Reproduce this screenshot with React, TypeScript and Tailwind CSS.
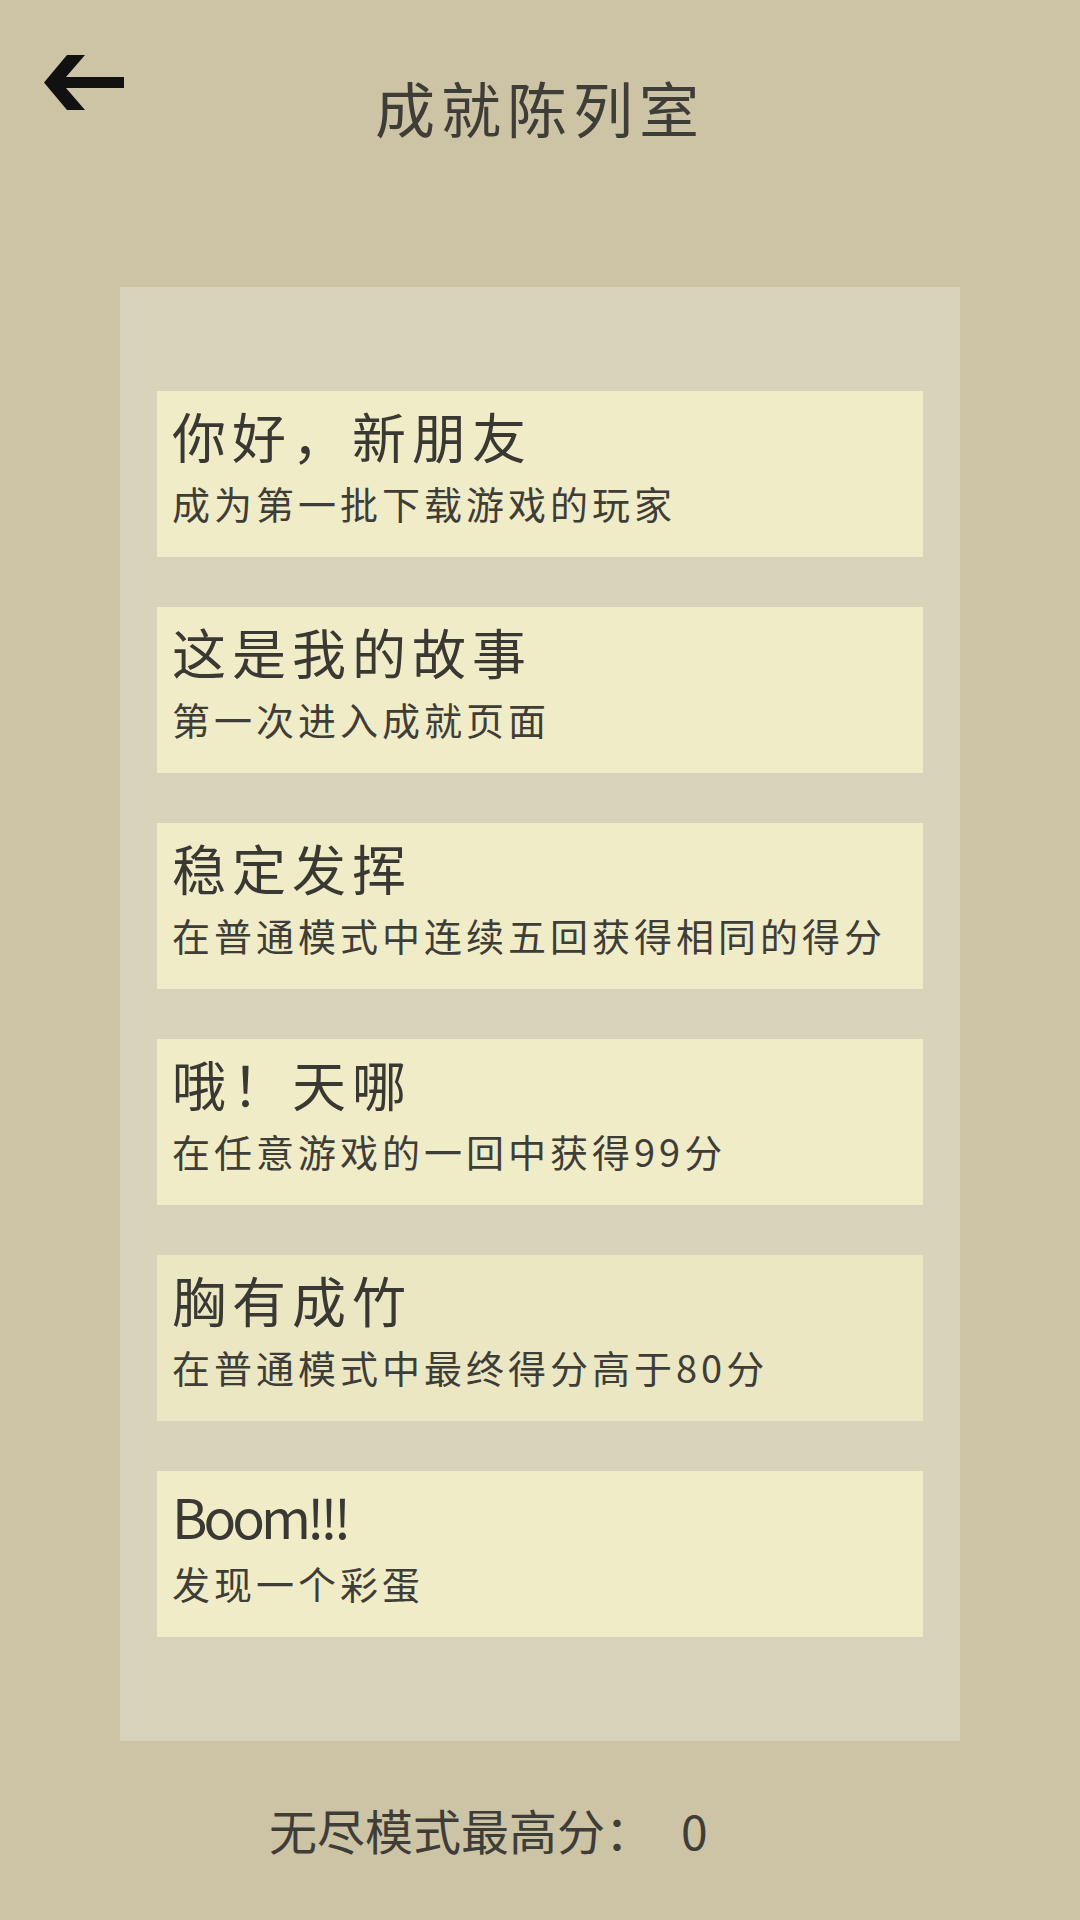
const FONT = "font-['Noto_Sans_CJK_SC','Noto_Sans',sans-serif]";

const achievements = [
  { title: "你好，新朋友", desc: "成为第一批下载游戏的玩家", bg: "bg-[#f0ecc8]" },
  { title: "这是我的故事", desc: "第一次进入成就页面", bg: "bg-[#f0ecc8]" },
  { title: "稳定发挥", desc: "在普通模式中连续五回获得相同的得分", bg: "bg-[#f0ecc8]" },
  { title: "哦！天哪", desc: "在任意游戏的一回中获得99分", bg: "bg-[#f0ecc8]" },
  { title: "胸有成竹", desc: "在普通模式中最终得分高于80分", bg: "bg-[#ebe7c3]" },
  { title: "Boom!!!", desc: "发现一个彩蛋", bg: "bg-[#f0ecc8]", latin: true },
];

function BackArrow() {
  return (
    <svg width="80" height="56" viewBox="0 0 80 56" className="block">
      <polygon
        points="0,27.5 23,0 41,0 22,22 80,22 80,33 22,33 41,55 23,55"
        fill="#111111"
      />
    </svg>
  );
}

export default function App() {
  return (
    <div className={`w-[1080px] h-[1920px] bg-[#cdc4a5] flex flex-col overflow-hidden ${FONT}`}>
      {/* Header */}
      <div className="grid grid-cols-[1fr_auto_1fr] items-start">
        <div className="pl-[44px] pt-[55px]">
          <BackArrow />
        </div>
        <h1 className="mt-[67px] text-[60px] leading-[80px] tracking-[6px] text-[#3f3d38] font-normal">
          成就陈列室
        </h1>
        <div />
      </div>

      {/* Achievement panel */}
      <div className="mt-[140px] mx-[120px] bg-[#d9d3bb] px-[37px] py-[104px] flex flex-col gap-[50px]">
        {achievements.map((a) => (
          <div key={a.title} className={`h-[166px] ${a.bg} pl-[15px] pt-[15px] flex flex-col`}>
            <div
              className={`text-[54px] leading-[60px] text-[#3a3833] whitespace-nowrap ${
                a.latin ? "tracking-[-4px]" : "tracking-[6px]"
              }`}
            >
              {a.title}
            </div>
            <div className="mt-[12px] text-[38px] leading-[50px] tracking-[4px] text-[#3f3d38] whitespace-nowrap">
              {a.desc}
            </div>
          </div>
        ))}
      </div>

      {/* Endless best score */}
      <div className="mt-[58px] pl-[269px] flex items-center text-[48px] leading-[60px] text-[#3f3d38] whitespace-nowrap">
        <span>无尽模式最高分：</span>
        <span className="ml-[28px]">0</span>
      </div>
    </div>
  );
}
